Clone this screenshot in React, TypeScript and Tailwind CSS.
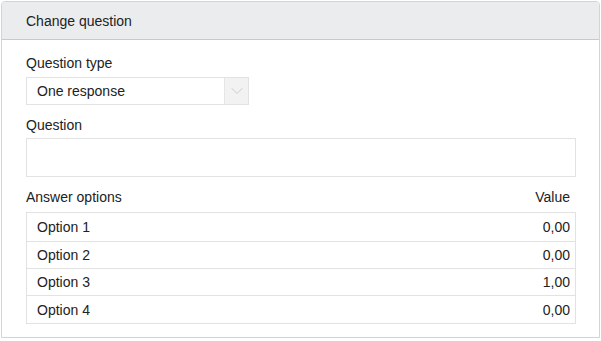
import { ChevronDown } from "lucide-react";

const options = [
  { label: "Option 1", value: "0,00", h: "h-[28px]" },
  { label: "Option 2", value: "0,00", h: "h-[27px]" },
  { label: "Option 3", value: "1,00", h: "h-[27px]" },
  { label: "Option 4", value: "0,00", h: "h-[28px]" },
];

export default function App() {
  return (
    <div className="w-[601px] h-[341px] bg-white p-px font-['Liberation_Sans',Arial,sans-serif] text-[14px] text-[#222]">
      <div className="w-[599px] h-[337px] border border-[#d4d4d4] rounded-t-[4px] bg-white">
        {/* Header */}
        <div className="h-[38px] bg-[#ebecee] border-b border-[#c9c9c9] rounded-t-[3px] flex items-center px-[24px] pt-px">
          <span className="leading-4">Change question</span>
        </div>

        <div className="px-[24px] pt-[15px] pb-[13px]">
          <label className="block leading-4 mb-[6px]">Question type</label>
          <div className="w-[223px] h-[28px] border border-[#e2e2e2] flex items-stretch">
            <div className="flex-1 flex items-center pl-[10px] leading-4">One response</div>
            <div className="w-[24px] bg-[#f2f2f3] border-l border-[#e6e6e6] flex items-center justify-center">
              <ChevronDown className="w-[20px] h-[20px] text-[#c4c7cb]" strokeWidth={1.1} />
            </div>
          </div>

          <label className="block leading-4 mt-[12px] mb-[5px]">Question</label>
          <div className="w-[550px] h-[39px] border border-[#e2e2e2]" />

          <div className="flex justify-between leading-4 mt-[12px] mb-[7px] pr-[5px]">
            <span>Answer options</span>
            <span>Value</span>
          </div>
          <div className="w-[550px] border border-[#e2e2e2]">
            {options.map((o, i) => (
              <div
                key={i}
                className={`${o.h} flex items-center justify-between pl-[10px] pr-[5px] leading-4 ${
                  i > 0 ? "border-t border-[#e2e2e2]" : ""
                }`}
              >
                <span>{o.label}</span>
                <span>{o.value}</span>
              </div>
            ))}
          </div>
        </div>
      </div>
    </div>
  );
}
